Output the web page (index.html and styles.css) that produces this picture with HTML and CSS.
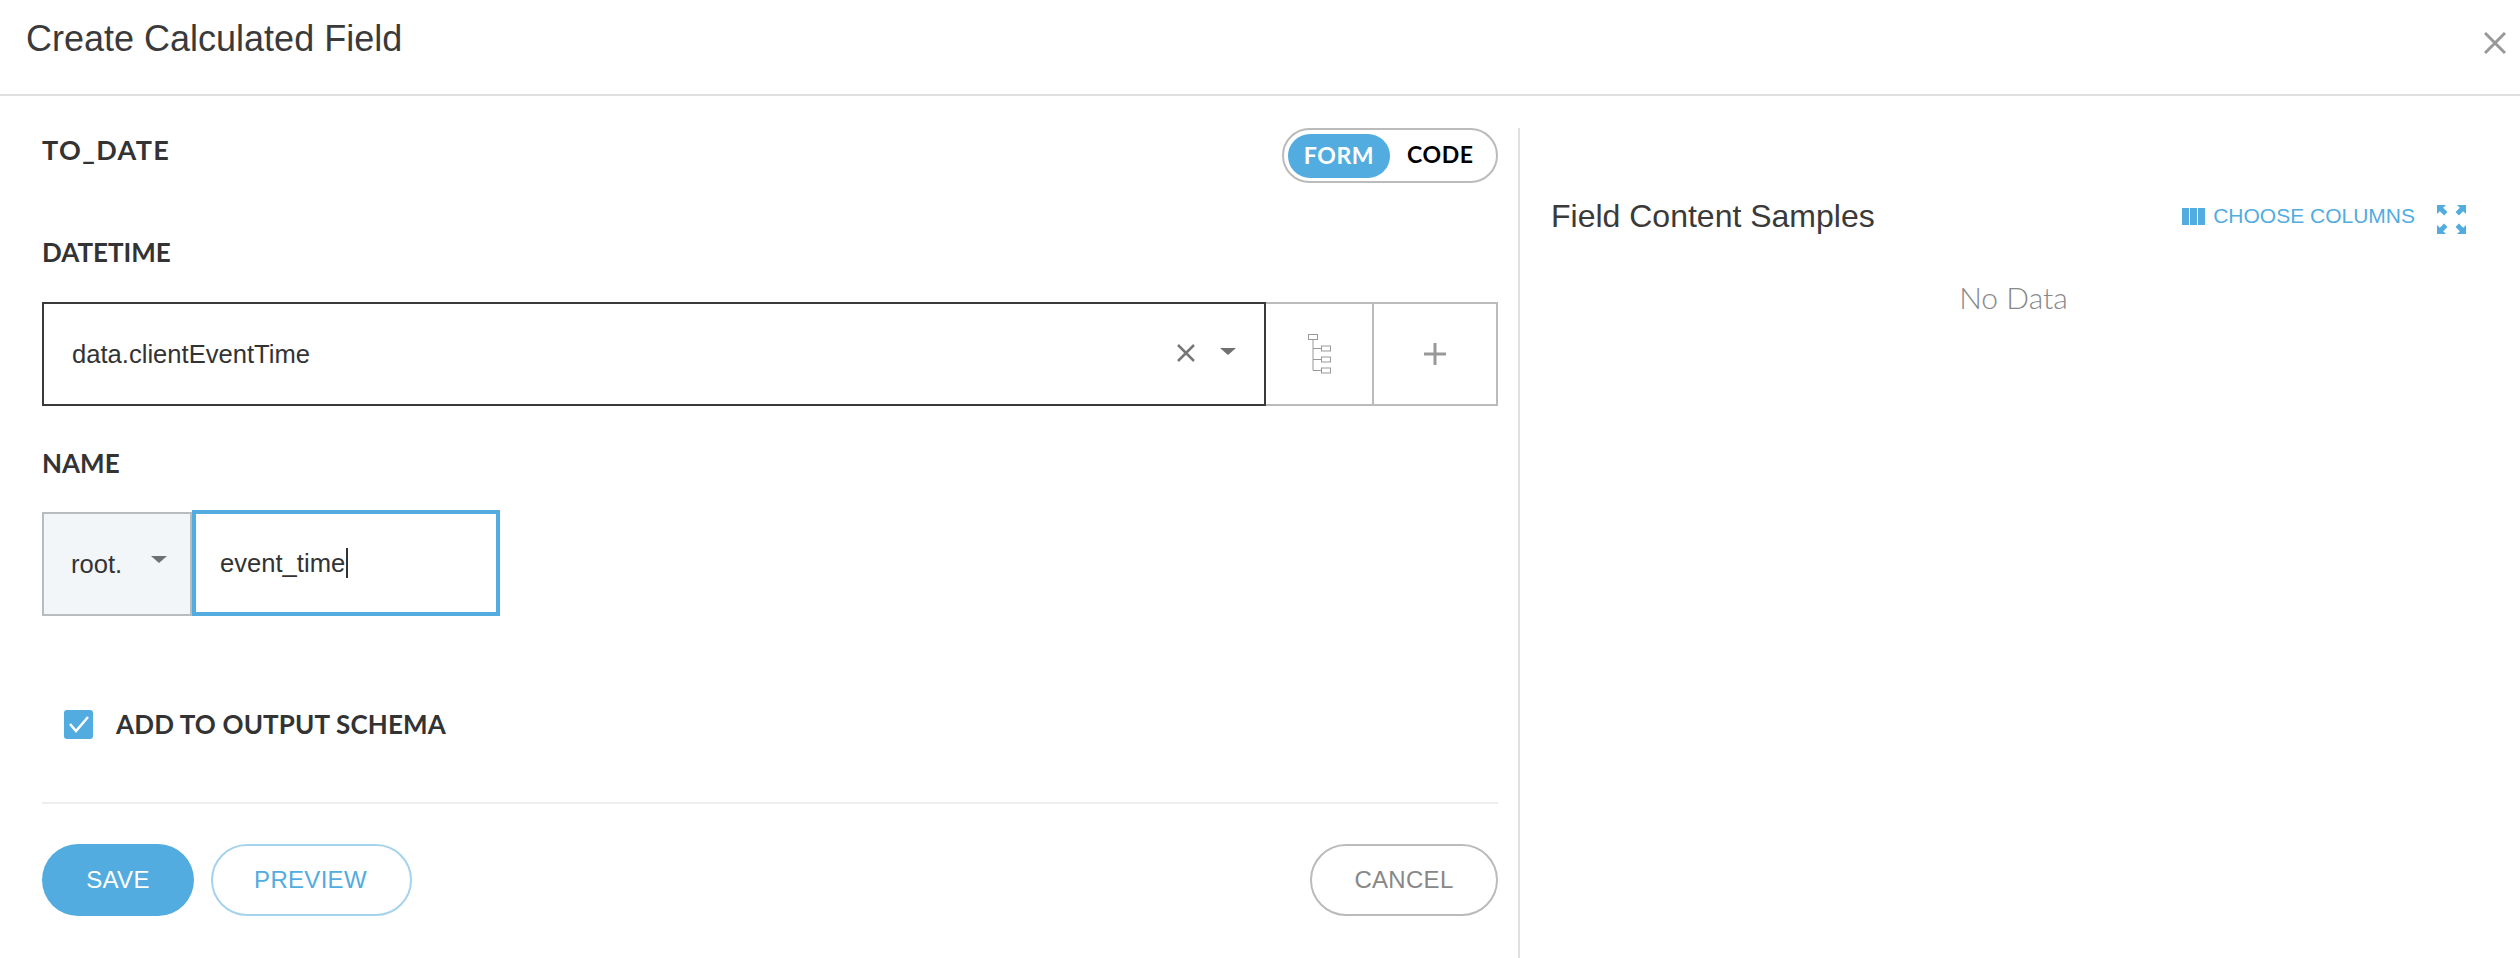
FILE: index.html
```html
<!DOCTYPE html>
<html lang="en">
<head>
<meta charset="UTF-8">
<meta name="viewport" content="width=device-width, initial-scale=1.0">
<title>Create Calculated Field</title>
<link rel="stylesheet" href="styles.css">
</head>
<body>

<header class="header">
    <h1 class="header-title">Create Calculated Field</h1>
    <svg class="close-icon" width="22" height="22" viewBox="0 0 22 22"><path d="M1 1L21 21M21 1L1 21"/></svg>
</header>

<div class="main">
    <form class="form-panel">
        <div class="title-row">
            <div class="func-name">TO_DATE</div>
            <div class="toggle">
                <span class="toggle-item active">FORM</span>
                <span class="toggle-item">CODE</span>
            </div>
        </div>

        <div class="field-label datetime-label">DATETIME</div>
        <div class="select-row">
            <div class="select-box">
                <span class="select-value">data.clientEventTime</span>
                <svg class="clear-icon" width="18" height="18" viewBox="0 0 18 18"><path d="M1 1L17 17M17 1L1 17"/></svg>
                <span class="caret"></span>
            </div>
            <div class="side-btn tree-btn">
                <svg width="24" height="40" viewBox="0 0 24 40" class="tree-icon">
                    <rect x="0.5" y="0.5" width="9" height="5"/>
                    <path d="M5 6V36.5H13M5 14.5H13M5 25.5H13"/>
                    <rect x="13.5" y="12" width="9" height="5"/>
                    <rect x="13.5" y="23" width="9" height="5"/>
                    <rect x="13.5" y="34" width="9" height="5"/>
                </svg>
            </div>
            <div class="side-btn plus-btn">
                <svg width="22" height="22" viewBox="0 0 22 22" class="plus-icon"><path d="M11 0V22M0 11H22"/></svg>
            </div>
        </div>

        <div class="field-label name-label">NAME</div>
        <div class="name-row">
            <div class="prefix-select">
                <span>root.</span>
                <span class="caret prefix-caret"></span>
            </div>
            <div class="name-input">event_time<span class="cursor"></span></div>
        </div>

        <div class="check-row">
            <span class="checkbox">
                <svg width="22" height="18" viewBox="0 0 22 18"><path d="M2 9L8 16L20 2"/></svg>
            </span>
            <span class="check-label">ADD TO OUTPUT SCHEMA</span>
        </div>

        <div class="form-divider"></div>

        <div class="button-row">
            <button type="button" class="btn btn-save">SAVE</button>
            <button type="button" class="btn btn-preview">PREVIEW</button>
            <button type="button" class="btn btn-cancel">CANCEL</button>
        </div>
    </form>

    <section class="samples-panel">
        <div class="samples-head">
            <h2 class="samples-title">Field Content Samples</h2>
            <div class="samples-actions">
                <svg class="columns-icon" width="23" height="17" viewBox="0 0 23 17"><path d="M0 0H7V17H0ZM8 0H15V17H8ZM16 0H23V17H16Z"/></svg>
                <span class="choose-columns">CHOOSE COLUMNS</span>
                <svg class="expand-icon" width="29" height="29" viewBox="0 0 29 29">
                    <path d="M0 0H9L6.2 2.8L10.5 7.1L7.1 10.5L2.8 6.2L0 9Z"/>
                    <path d="M29 0H20L22.8 2.8L18.5 7.1L21.9 10.5L26.2 6.2L29 9Z"/>
                    <path d="M0 29H9L6.2 26.2L10.5 21.9L7.1 18.5L2.8 22.8L0 20Z"/>
                    <path d="M29 29H20L22.8 26.2L18.5 21.9L21.9 18.5L26.2 22.8L29 20Z"/>
                </svg>
            </div>
        </div>
        <div class="no-data">No Data</div>
    </section>
</div>

</body>
</html>
```

FILE: styles.css
```css
/* Calculated field dialog */
* {
    box-sizing: border-box;
}
body {
    margin: 0;
    height: 958px;
    overflow: hidden;
    background-color: #fff;
    color: #333;
    font-family: "Liberation Sans", Arial, sans-serif;
}

/* Header */
.header {
    display: flex;
    justify-content: space-between;
    align-items: flex-start;
    height: 96px;
    padding: 18px 14px 0 26px;
    border-bottom: 2px solid #e0e0e0;
}
.header-title {
    margin: 0;
    font-size: 36px;
    line-height: 42px;
    font-weight: normal;
    color: #3a3a3a;
}
.close-icon {
    margin-top: 14px;
}
.close-icon path {
    fill: none;
    stroke: #999;
    stroke-width: 3;
}

/* Layout */
.main {
    display: flex;
    height: 862px;
    padding: 32px 0 0 42px;
}
.form-panel {
    width: 1456px;
}
.samples-panel {
    flex: 1;
    margin-left: 20px;
    padding: 63px 54px 0 31px;
    border-left: 2px solid #e0e0e0;
}

/* Left form */
.title-row {
    display: flex;
    justify-content: space-between;
    align-items: flex-start;
    height: 55px;
}
.func-name, .field-label, .check-label {
    font-family: Lato, sans-serif;
    font-weight: bold;
    font-size: 26px;
    line-height: 27px;
    color: #333;
}
.func-name {
    margin-top: 8px;
    font-size: 27px;
    letter-spacing: 1.4px;
}
.check-label {
    letter-spacing: 0.15px;
}
.toggle {
    display: flex;
    align-items: center;
    width: 216px;
    height: 55px;
    padding: 0 4px;
    border: 2px solid #bbb;
    border-radius: 28px;
    font-family: Lato, sans-serif;
    font-weight: bold;
    font-size: 23px;
    letter-spacing: 0.6px;
}
.toggle-item {
    color: #000;
    margin-left: 17px;
    padding-bottom: 4px;
}
.toggle-item.active {
    display: flex;
    justify-content: center;
    align-items: center;
    width: 102px;
    height: 44px;
    margin-left: 0;
    padding-bottom: 2px;
    border-radius: 22px;
    background-color: #52acdf;
    color: #fff;
}
.datetime-label {
    margin-top: 56px;
}
.select-row {
    display: flex;
    height: 104px;
    margin-top: 36px;
}
.select-box {
    display: flex;
    align-items: center;
    width: 1224px;
    padding-left: 28px;
    border: 2px solid #3a3a3a;
    font-size: 25.6px;
}
.select-value {
    flex: 1;
}
.clear-icon {
    margin-right: 25px;
    margin-top: -2px;
}
.clear-icon path {
    fill: none;
    stroke: #777;
    stroke-width: 2.5;
}
.caret {
    width: 0;
    height: 0;
    margin-right: 28px;
    margin-top: -6px;
    border-left: 8px solid transparent;
    border-right: 8px solid transparent;
    border-top: 7px solid #707070;
}
.side-btn {
    display: flex;
    justify-content: center;
    align-items: center;
    border: 2px solid #bbb;
    border-left: none;
}
.tree-btn {
    width: 108px;
}
.plus-btn {
    width: 124px;
}
.tree-icon {
    margin-left: 2px;
}
.tree-icon rect, .tree-icon path {
    fill: none;
    stroke: #999;
    stroke-width: 1;
}
.plus-icon path {
    fill: none;
    stroke: #999;
    stroke-width: 3;
}
.name-label {
    margin-top: 44px;
}
.name-row {
    display: flex;
    align-items: flex-end;
    height: 106px;
    margin-top: 33px;
    font-size: 25.6px;
}
.prefix-select {
    display: flex;
    align-items: center;
    justify-content: space-between;
    width: 150px;
    height: 104px;
    padding-left: 27px;
    border: 2px solid #b8bcbe;
    background-color: #f2f6f9;
}
.prefix-caret {
    margin-right: 23px;
    margin-top: -10px;
}
.name-input {
    display: flex;
    align-items: center;
    width: 308px;
    height: 106px;
    padding-left: 24px;
    border: 4px solid #52acdf;
}
.cursor {
    width: 2px;
    height: 30px;
    margin-left: 1px;
    background-color: #333;
}
.check-row {
    display: flex;
    align-items: center;
    height: 30px;
    margin-top: 93px;
    padding-left: 22px;
}
.checkbox {
    display: flex;
    justify-content: center;
    align-items: center;
    width: 29px;
    height: 29px;
    margin-right: 23px;
    border-radius: 3px;
    background-color: #52acdf;
}
.checkbox path {
    fill: none;
    stroke: #fff;
    stroke-width: 2.5;
}
.form-divider {
    height: 2px;
    margin-top: 63px;
    background-color: #eee;
}
.button-row {
    display: flex;
    margin-top: 40px;
}
.btn {
    height: 72px;
    padding: 0;
    border-radius: 36px;
    background-color: #fff;
    font-family: "Liberation Sans", Arial, sans-serif;
    font-size: 24px;
    letter-spacing: 0.3px;
    cursor: pointer;
}
.btn-save {
    width: 152px;
    border: none;
    background-color: #52acdf;
    color: #fff;
}
.btn-preview {
    width: 201px;
    margin-left: 17px;
    padding-right: 2px;
    border: 2px solid #a5d3ee;
    color: #52acdf;
}
.btn-cancel {
    width: 188px;
    margin-left: auto;
    border: 2px solid #bbb;
    color: #888;
}

/* Right panel */
.samples-head {
    display: flex;
    justify-content: space-between;
    align-items: center;
    height: 50px;
}
.samples-title {
    margin: 0;
    font-size: 32px;
    font-weight: normal;
    color: #3a3a3a;
}
.samples-actions {
    display: flex;
    align-items: center;
}
.columns-icon path, .expand-icon path {
    fill: #52acdf;
}
.choose-columns {
    margin: 0 22px 0 8px;
    font-size: 21px;
    color: #52acdf;
}
.expand-icon {
    margin-top: 6px;
}
.no-data {
    margin-top: 38px;
    padding-left: 10px;
    text-align: center;
    font-family: Lato, sans-serif;
    font-weight: 300;
    font-size: 30px;
    color: #888;
}
```
